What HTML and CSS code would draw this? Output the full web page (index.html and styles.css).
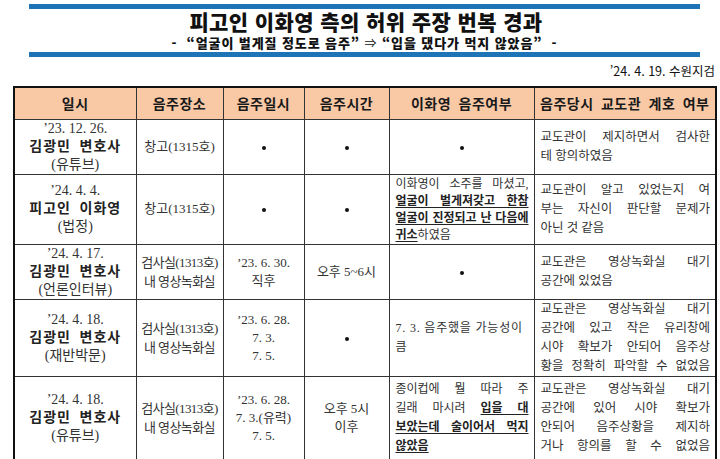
FILE: index.html
```html
<!DOCTYPE html>
<html lang="ko">
<head>
<meta charset="utf-8">
<link rel="stylesheet" href="styles.css">
</head>
<body>
<div class="page">
  <header class="banner">
    <div class="bar"></div>
    <h1 class="title">피고인 이화영 측의 허위 주장 번복 경과</h1>
    <p class="subtitle">-&nbsp; “얼굴이 벌게질 정도로 음주” <span class="arrow">⇒</span> “입을 댔다가 먹지 않았음” &nbsp;-</p>
    <div class="bar"></div>
  </header>
  <p class="date">’24. 4. 19. 수원지검</p>
  <table class="grid">
    <colgroup>
      <col class="c1"><col class="c2"><col class="c3"><col class="c4"><col class="c5"><col class="c6">
    </colgroup>
    <thead>
      <tr class="head">
        <th>일시</th><th>음주장소</th><th>음주일시</th><th>음주시간</th><th>이화영 음주여부</th><th>음주당시 교도관 계호 여부</th>
      </tr>
    </thead>
    <tbody>
      <tr class="r1">
        <td class="who">’23. 12. 26.<br><b>김광민 변호사</b><br>(유튜브)</td>
        <td class="ctr">창고(1315호)</td>
        <td class="ctr"><span class="dot"></span></td>
        <td class="ctr"><span class="dot"></span></td>
        <td class="ctr"><span class="dot"></span></td>
        <td class="just"><span class="ln">교도관이 제지하면서 검사한</span><span class="end">테 항의하였음</span></td>
      </tr>
      <tr class="r2">
        <td class="who">’24. 4. 4.<br><b>피고인 이화영</b><br>(법정)</td>
        <td class="ctr">창고(1315호)</td>
        <td class="ctr"><span class="dot"></span></td>
        <td class="ctr"><span class="dot"></span></td>
        <td class="just tight"><span class="ln">이화영이 소주를 마셨고,</span><span class="ln"><b class="u">얼굴이 벌게져갖고 한참</b></span><span class="ln"><b class="u">얼굴이 진정되고 난 다음에</b></span><span class="end"><b class="u">귀소</b>하였음</span></td>
        <td class="just"><span class="ln">교도관이 알고 있었는지 여</span><span class="ln">부는 자신이 판단할 문제가</span><span class="end">아닌 것 같음</span></td>
      </tr>
      <tr class="r3">
        <td class="who">’24. 4. 17.<br><b>김광민 변호사</b><br>(언론인터뷰)</td>
        <td class="ctr place">검사실(1313호)<br>내 영상녹화실</td>
        <td class="ctr">’23. 6. 30.<br>직후</td>
        <td class="ctr">오후 5~6시</td>
        <td class="ctr"><span class="dot"></span></td>
        <td class="just"><span class="ln">교도관은 영상녹화실 대기</span><span class="end">공간에 있었음</span></td>
      </tr>
      <tr class="r4">
        <td class="who">’24. 4. 18.<br><b>김광민 변호사</b><br>(재반박문)</td>
        <td class="ctr place">검사실(1313호)<br>내 영상녹화실</td>
        <td class="ctr">’23. 6. 28.<br>7. 3.<br>7. 5.</td>
        <td class="ctr"><span class="dot"></span></td>
        <td class="just"><span class="end spaced">7. 3. 음주했을 가능성이</span><span class="end">큼</span></td>
        <td class="just"><span class="ln">교도관은 영상녹화실 대기</span><span class="ln">공간에 있고 작은 유리창에</span><span class="ln">시야 확보가 안되어 음주상</span><span class="ln">황을 정확히 파악할 수 없었음</span></td>
      </tr>
      <tr class="r5">
        <td class="who">’24. 4. 18.<br><b>김광민 변호사</b><br>(유튜브)</td>
        <td class="ctr place">검사실(1313호)<br>내 영상녹화실</td>
        <td class="ctr">’23. 6. 28.<br>7. 3.(유력)<br>7. 5.</td>
        <td class="ctr">오후 5시<br>이후</td>
        <td class="just"><span class="ln">종이컵에 뭘 따라 주</span><span class="ln">길래 마시려 <b class="u">입을 대</b></span><span class="ln"><b class="u">보았는데 술이어서 먹지</b></span><span class="end"><b class="u">않았음</b></span></td>
        <td class="just"><span class="ln">교도관은 영상녹화실 대기</span><span class="ln">공간에 있어 시야 확보가</span><span class="ln">안되어 음주상황을 제지하</span><span class="ln">거나 항의를 할 수 없었음</span></td>
      </tr>
    </tbody>
  </table>
</div>
</body>
</html>
```

FILE: styles.css
```css
* { box-sizing: border-box; }
html, body { margin: 0; padding: 0; background: #fff; }
body {
  width: 720px;
  height: 459px;
  overflow: hidden;
  font-family: "Liberation Serif", "Noto Sans CJK KR", serif;
  color: #222;
}
.page { padding-top: 4px; }
.banner {
  margin-left: 29px;
  width: 671px;
  text-align: center;
}
.bar {
  height: 5px;
  background: #1d74b6;
}
.title {
  margin: 0;
  height: 25px;
  line-height: 25px;
  padding-left: 3px;
  font-family: "Noto Sans CJK KR", sans-serif;
  font-weight: 900;
  font-size: 21px;
  letter-spacing: 0.4px;
  color: #111;
}
.subtitle {
  margin: 0;
  height: 18px;
  line-height: 17px;
  font-family: "Noto Sans CJK KR", sans-serif;
  font-weight: 900;
  font-size: 13px;
  color: #111;
  letter-spacing: 0.9px;
}
.arrow { font-weight: 400; font-size: 12px; }
.date {
  margin: 0 5px 0 0;
  height: 29px;
  padding-top: 6px;
  line-height: 16px;
  text-align: right;
  font-family: "Noto Sans CJK KR", sans-serif;
  font-size: 12.5px;
  color: #111;
}
.grid {
  margin-left: 13px;
  width: 702px;
  border-collapse: collapse;
  table-layout: fixed;
  border: 2px solid #111;
}
.c1 { width: 122px; }
.c2 { width: 87px; }
.c3 { width: 81px; }
.c4 { width: 85px; }
.c5 { width: 145px; }
.c6 { width: 182px; }
.grid th, .grid td {
  border: 1px solid #333;
  padding: 0;
  font-size: 13px;
  vertical-align: middle;
}
.grid th {
  background: #f9c9a6;
  height: 32px;
  font-family: "Noto Sans CJK KR", sans-serif;
  font-weight: 700;
  font-size: 14px;
  color: #1a1a1a;
  letter-spacing: 0.5px;
  word-spacing: 3px;
}
.r1 td { height: 55px; }
.r2 td { height: 69px; }
.r3 td { height: 53px; }
.r4 td { height: 75px; }
.r5 td { height: 85px; }
.who {
  text-align: center;
  line-height: 18px;
  font-size: 14px !important;
  color: #333;
}
.who b {
  font-family: "Liberation Serif", "Noto Sans CJK KR", serif;
  font-weight: 700;
  color: #222;
  letter-spacing: 1px;
  word-spacing: 4px;
}
.ctr {
  text-align: center;
  line-height: 18px;
  color: #333;
}
.place { letter-spacing: -0.6px; line-height: 19px; }
.dot {
  display: inline-block;
  width: 4px;
  height: 4px;
  border-radius: 50%;
  background: #111;
  vertical-align: middle;
}
.just {
  padding: 0 5px 0 6px !important;
  line-height: 19px;
  font-size: 12.5px !important;
  color: #333;
}
.r2 .tight, .r5 td:nth-child(5), .r4 td:nth-child(5) { font-size: 12px !important; }
.ln {
  display: block;
  white-space: nowrap;
  text-align: justify;
  text-align-last: justify;
}
.end {
  display: block;
  white-space: nowrap;
  text-align: left;
}
.spaced { letter-spacing: 0.8px; }
.tight { line-height: 17px; padding-top: 1px !important; }
.u {
  font-weight: 700;
  color: #222;
  text-decoration: underline;
  text-underline-offset: 2px;
}
```
